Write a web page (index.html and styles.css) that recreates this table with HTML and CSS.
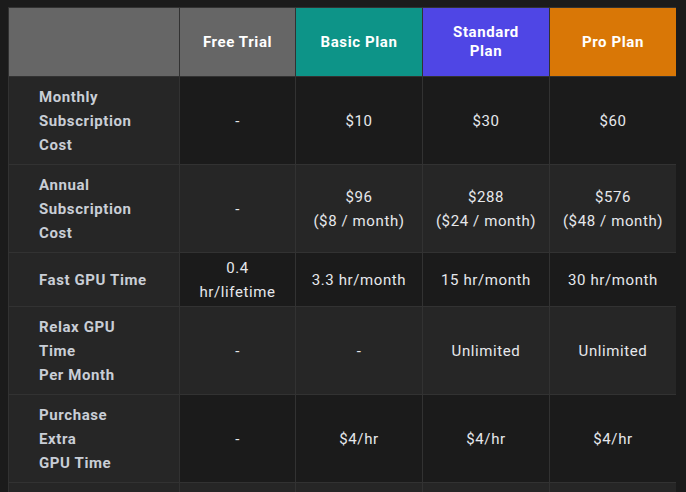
FILE: index.html
```html
<!DOCTYPE html>
<html lang="en">
  <head>
    <meta charset="UTF-8" />
    <meta name="viewport" content="width=device-width, initial-scale=1.0" />
    <title>Plans</title>
    <link rel="stylesheet" href="styles.css">
  </head>
  <body>
    <table class="plans">
      <colgroup>
        <col class="col-label" />
        <col class="col-free" />
        <col class="col-plan" />
        <col class="col-plan" />
        <col class="col-plan" />
      </colgroup>
      <thead>
        <tr>
          <th class="head-free"></th>
          <th class="head-free">Free Trial</th>
          <th class="head-basic">Basic Plan</th>
          <th class="head-standard">Standard Plan</th>
          <th class="head-pro">Pro Plan</th>
        </tr>
      </thead>
      <tbody>
        <tr>
          <th>Monthly<br />Subscription<br />Cost</th>
          <td>-</td>
          <td>$10</td>
          <td>$30</td>
          <td>$60</td>
        </tr>
        <tr>
          <th>Annual<br />Subscription<br />Cost</th>
          <td>-</td>
          <td>$96<br />($8 / month)</td>
          <td>$288<br />($24 / month)</td>
          <td>$576<br />($48 / month)</td>
        </tr>
        <tr>
          <th>Fast GPU Time</th>
          <td>0.4 hr/lifetime</td>
          <td>3.3 hr/month</td>
          <td>15 hr/month</td>
          <td>30 hr/month</td>
        </tr>
        <tr>
          <th>Relax GPU<br />Time<br />Per Month</th>
          <td>-</td>
          <td>-</td>
          <td>Unlimited</td>
          <td>Unlimited</td>
        </tr>
        <tr>
          <th>Purchase<br />Extra<br />GPU Time</th>
          <td>-</td>
          <td>$4/hr</td>
          <td>$4/hr</td>
          <td>$4/hr</td>
        </tr>
        <tr class="row-next">
          <th></th>
          <td></td>
          <td></td>
          <td></td>
          <td></td>
        </tr>
      </tbody>
    </table>
  </body>
</html>
```

FILE: styles.css
```css
html {
  background-color: #1b1b1b;
}

body {
  margin: 7px 10px 0 8px;
  font-family: Roboto, "Noto Sans", sans-serif;
  font-size: 15px;
  letter-spacing: 0.04em;
}

.plans {
  width: 668px;
  table-layout: fixed;
  border-collapse: collapse;
}

.col-label {
  width: 171px;
}
.col-free {
  width: 116px;
}
.col-plan {
  width: 127px;
}

.plans th,
.plans td {
  border: 1px solid #323232;
}

thead th {
  padding: 15px 16px;
  line-height: 19px;
  color: #fff;
  font-weight: 700;
  text-align: center;
}

.head-free {
  background-color: #666666;
}
.head-basic {
  background-color: #0d9488;
}
.head-standard {
  background-color: #4f46e5;
}
.head-pro {
  background-color: #d97706;
}

tbody th {
  padding: 8px 8px 7px 30px;
  line-height: 24px;
  text-align: left;
  font-weight: 700;
  color: #c9ced6;
  background-color: #262626;
}

tbody td {
  padding: 3px 10px 2px;
  line-height: 24px;
  text-align: center;
  color: #e6e8ec;
  background-color: #1b1b1b;
}

tbody tr:nth-child(even) td {
  background-color: #262626;
}

.row-next th,
.row-next td {
  height: 40px;
}
```
